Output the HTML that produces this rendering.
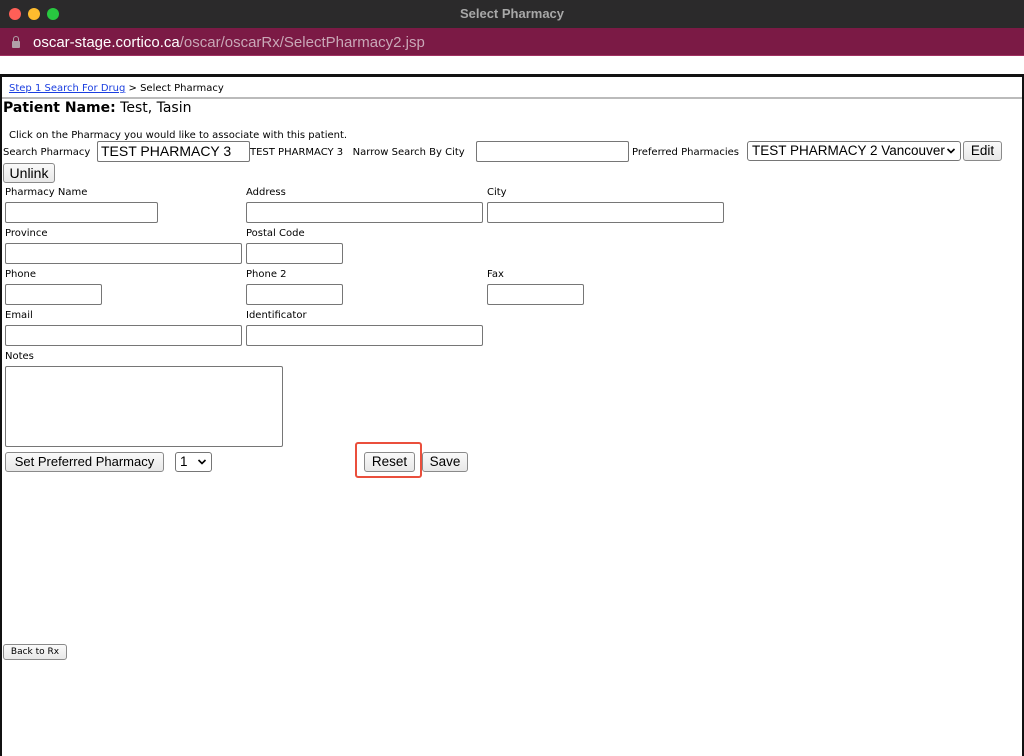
<!DOCTYPE html>
<html><head><meta charset="utf-8"><style>
*{margin:0;padding:0;box-sizing:border-box}
body{width:1024px;height:756px;position:relative;background:#fff;overflow:hidden;font-family:"DejaVu Sans",Verdana,sans-serif;font-size:10px;color:#000}
.a{position:absolute;white-space:nowrap}
.in{position:absolute;border:1px solid #767676;border-radius:2px;background:#fff;height:21px}
.btn{position:absolute;border:1px solid #8a8a8a;border-radius:3px;background:linear-gradient(#fafafa,#e8e8e8);font-family:"Liberation Sans",Arial,sans-serif;font-size:13.5px;text-align:center;line-height:18px;height:20px;white-space:nowrap}
.sel{position:absolute;border:1px solid #767676;border-radius:3px;background:#fff;font-family:"Liberation Sans",Arial,sans-serif;font-size:13.5px;height:20px;line-height:18px;padding-left:4px;white-space:nowrap;overflow:hidden}
.sel svg{position:absolute;right:4px;top:6px;background:#fff}
.lab{position:absolute;font-size:10px;white-space:nowrap}
</style></head><body>
<div class="a" style="left:0;top:0;width:1024px;height:28px;background:#2b2a2b"></div>
<div class="a" style="left:9px;top:8px;width:12px;height:12px;border-radius:6px;background:#fe5f57"></div>
<div class="a" style="left:28px;top:8px;width:12px;height:12px;border-radius:6px;background:#febc2e"></div>
<div class="a" style="left:47px;top:8px;width:12px;height:12px;border-radius:6px;background:#28c840"></div>
<div class="a" style="left:0;top:6px;width:1024px;text-align:center;color:#a8a8a8;font:bold 13px 'Liberation Sans',Arial,sans-serif">Select Pharmacy</div>
<div class="a" style="left:0;top:28px;width:1024px;height:28px;background:#7b1a45;border-bottom:1px solid #a03060"></div>
<div class="a" style="left:12px;top:41px;width:8px;height:7px;background:#b0a0a8;border-radius:1px"></div>
<div class="a" style="left:13px;top:36px;width:6px;height:6px;border:1.5px solid #b0a0a8;border-bottom:none;border-radius:3px 3px 0 0"></div>
<div class="a" style="left:33px;top:34px;font:15px 'Liberation Sans',Arial,sans-serif;color:#fff">oscar-stage.cortico.ca<span style="color:#c9a7b7">/oscar/oscarRx/SelectPharmacy2.jsp</span></div>
<div class="a" style="left:0;top:74px;width:1024px;height:3px;background:#111"></div>
<div class="a" style="left:0;top:74px;width:2px;height:682px;background:#111"></div>
<div class="a" style="left:1022px;top:74px;width:2px;height:682px;background:#111"></div>
<div class="a" style="left:2px;top:97px;width:1020px;height:2px;background:#bbb"></div>
<div class="a" style="left:9px;top:83px;font-size:10px"><span style="color:#1a3ee0;text-decoration:underline">Step 1 Search For Drug</span> &gt; Select Pharmacy</div>
<div class="a" style="left:3px;top:100px;font-size:14px"><b>Patient Name:</b> Test, Tasin</div>
<div class="a" style="left:9px;top:130px">Click on the Pharmacy you would like to associate with this patient.</div>
<div class="a" style="left:3px;top:147px">Search Pharmacy</div>
<div class="in" style="left:97px;top:141px;width:153px;font:14px 'Liberation Sans',Arial,sans-serif;padding:1px 3px">TEST PHARMACY 3</div>
<div class="a" style="left:250px;top:147px">TEST PHARMACY 3 &nbsp; Narrow Search By City</div>
<div class="in" style="left:476px;top:141px;width:153px"></div>
<div class="a" style="left:632px;top:147px">Preferred Pharmacies</div>
<div class="sel" style="left:747px;top:141px;width:214px">TEST PHARMACY 2 Vancouver<svg width="10" height="6" viewBox="0 0 10 6"><path d="M1.5 1l3.5 3.5L8.5 1" fill="none" stroke="#000" stroke-width="1.6"/></svg></div>
<div class="btn" style="left:963px;top:141px;width:39px">Edit</div>
<div class="btn" style="left:3px;top:163px;width:52px;font-size:14px">Unlink</div>
<div class="lab" style="left:5px;top:187px">Pharmacy Name</div>
<div class="lab" style="left:246px;top:187px">Address</div>
<div class="lab" style="left:487px;top:187px">City</div>
<div class="in" style="left:5px;top:202px;width:153px"></div>
<div class="in" style="left:246px;top:202px;width:237px"></div>
<div class="in" style="left:487px;top:202px;width:237px"></div>
<div class="lab" style="left:5px;top:228px">Province</div>
<div class="lab" style="left:246px;top:228px">Postal Code</div>
<div class="in" style="left:5px;top:243px;width:237px"></div>
<div class="in" style="left:246px;top:243px;width:97px"></div>
<div class="lab" style="left:5px;top:269px">Phone</div>
<div class="lab" style="left:246px;top:269px">Phone 2</div>
<div class="lab" style="left:487px;top:269px">Fax</div>
<div class="in" style="left:5px;top:284px;width:97px"></div>
<div class="in" style="left:246px;top:284px;width:97px"></div>
<div class="in" style="left:487px;top:284px;width:97px"></div>
<div class="lab" style="left:5px;top:310px">Email</div>
<div class="lab" style="left:246px;top:310px">Identificator</div>
<div class="in" style="left:5px;top:325px;width:237px"></div>
<div class="in" style="left:246px;top:325px;width:237px"></div>
<div class="lab" style="left:5px;top:351px">Notes</div>
<div class="in" style="left:5px;top:366px;width:278px;height:81px"></div>
<div class="btn" style="left:5px;top:452px;width:159px;font-size:13px">Set Preferred Pharmacy</div>
<div class="sel" style="left:175px;top:452px;width:37px">1<svg width="10" height="6" viewBox="0 0 10 6"><path d="M1.5 1l3.5 3.5L8.5 1" fill="none" stroke="#000" stroke-width="1.6"/></svg></div>
<div class="a" style="left:355px;top:442px;width:67px;height:36px;border:2px solid #ea4f3c;border-radius:3px"></div>
<div class="btn" style="left:364px;top:452px;width:51px">Reset</div>
<div class="btn" style="left:422px;top:452px;width:46px">Save</div>
<div class="btn" style="left:3px;top:644px;width:64px;height:16px;font:9px 'DejaVu Sans',Verdana,sans-serif;line-height:14px">Back to Rx</div>
</body></html>
